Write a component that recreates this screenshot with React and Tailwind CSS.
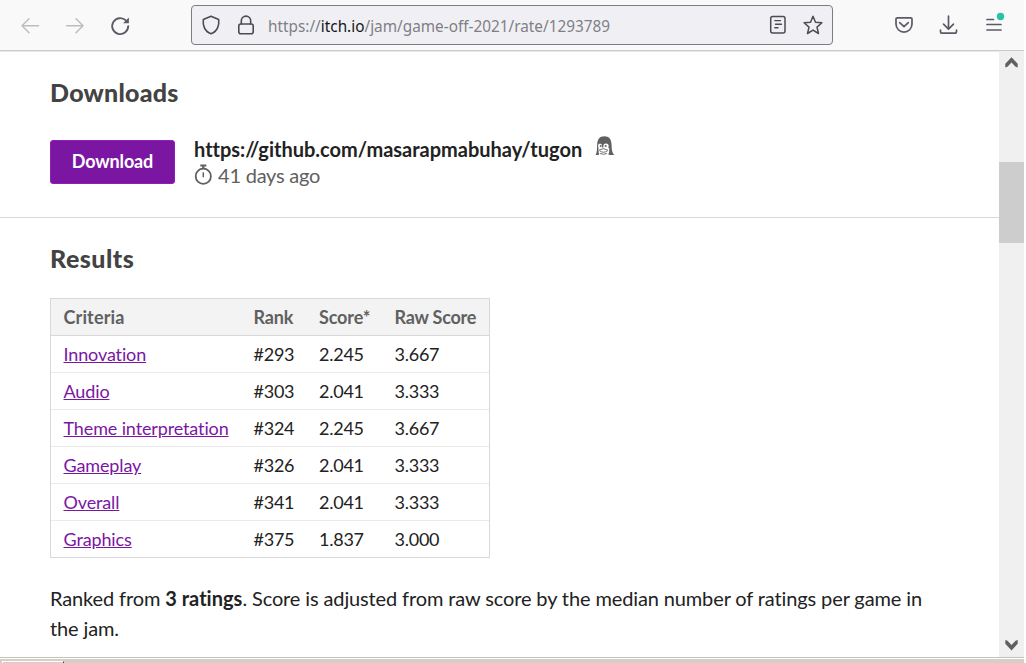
import React from "react";

const rows = [
  ["Innovation", "#293", "2.245", "3.667"],
  ["Audio", "#303", "2.041", "3.333"],
  ["Theme interpretation", "#324", "2.245", "3.667"],
  ["Gameplay", "#326", "2.041", "3.333"],
  ["Overall", "#341", "2.041", "3.333"],
  ["Graphics", "#375", "1.837", "3.000"],
];

function Icon({ className = "", children, w = 20, h = 20, sw = 1.5 }) {
  return (
    <svg width={w} height={h} viewBox={`0 0 ${w} ${h}`} fill="none" stroke="currentColor" strokeWidth={sw} strokeLinecap="round" strokeLinejoin="round" className={"shrink-0 " + className}>
      {children}
    </svg>
  );
}

function Toolbar() {
  return (
    <header className="flex h-[50px] w-[1024px] shrink-0 items-start bg-[#f9f9fa] text-[#5b5b66]">
      <Icon className="mt-4 ml-5 text-[#bdbdc1]"><path d="M18.5 9.8H2M9 2.8L2 9.8l7 7" /></Icon>
      <Icon className="mt-4 ml-[25px] text-[#bdbdc1]"><path d="M1.500 9.800H18M11 2.800l7 7-7 7" /></Icon>
      <Icon className="mt-4 ml-[25px]" sw={1.9}>
        <path d="M18.200 10.300a8 8 0 1 1-2.400-5.900" />
        <path d="M18.900 1.500v5.800h-5.800z" fill="currentColor" stroke="none" />
      </Icon>
      <div className="mt-[5px] ml-[61px] flex h-10 w-[642px] items-center rounded border border-[#7c7c82] bg-[#f0f0f4]">
        <Icon className="ml-[9px] text-[#4b4b52]" sw={1.6}><path d="M10 1.300 17.700 4.500c.7 5.500-1.200 12-7.700 14.200C3.500 16.500 1.600 10 2.300 4.500z" /></Icon>
        <Icon className="ml-[15px] text-[#4b4b52]" sw={1.6}>
          <rect x="2.800" y="9" width="14.400" height="9.700" rx="2" />
          <path d="M5.300 9V5.800a4.700 4.700 0 0 1 9.400 0V9" />
        </Icon>
        <span className="ml-[12px] w-[500px] font-['Noto_Sans',sans-serif] text-base whitespace-nowrap">
          <svg width="342" height="24" className="overflow-visible" fill="#7f7f86">
            <text x="0" y="19" textLength="342" lengthAdjust="spacingAndGlyphs">https://<tspan fill="#15141a">itch.io</tspan>/jam/game-off-2021/rate/1293789</text>
          </svg>
        </span>
        <Icon className="text-[#4b4b52]">
          <rect x="2.700" y="1.500" width="14.300" height="16.500" rx="2" />
          <path d="M6.800 5.600h5.700M7.500 9.200h6M6.800 12.700h3.200" strokeWidth="1.400" />
        </Icon>
        <Icon className="ml-[15px] text-[#4b4b52]"><path d="M10 1.300l2.500 6 6.400.5-4.900 4.300 1.500 6.400-5.500-3.400-5.500 3.400L6 12.100 1.100 7.800l6.400-.5z" /></Icon>
      </div>
      <Icon className="mt-[15px] ml-[61px]" sw={1.7}>
        <path d="M3.300 2.800h13.400q1.300 0 1.300 1.300v5a8 8 0 0 1-16 0v-5q0-1.300 1.300-1.300z" />
        <path d="M5.700 7.600 10 11.700l4.300-4.100" />
      </Icon>
      <Icon className="mt-[15px] ml-[25px]" sw={1.7}>
        <path d="M9.500 1v13M4.500 9.200l5 5 5-5" /><path d="M1.500 15v1.500q0 1.700 1.700 1.700h12.600q1.700 0 1.700-1.700V15" />
      </Icon>
      <Icon className="mt-[12px] ml-[26px]" w={24} h={22} sw={1.7}>
        <path d="M2 7.500h6.500M2 12.500h14M2 18h14" />
        <circle cx="15.500" cy="4.500" r="3.700" fill="#2ac3a2" stroke="none" />
      </Icon>
    </header>
  );
}

function Scrollbar() {
  return (
    <div className="flex w-[25px] shrink-0 flex-col items-center bg-[#f0f0f0]">
      <svg width="25" height="111" className="shrink-0"><path d="M6.300 16.500v-3.700l6.200-6.500 6.200 6.500v3.700l-2.200-.7-4-4.200-4 4.200z" fill="#606060" /></svg>
      <div className="h-[81px] w-full shrink-0 bg-[#cdcdcd]" />
      <div className="flex-1" />
      <svg width="25" height="24" className="shrink-0"><path d="M6.300 7v3.700l6.200 6.800 6.200-6.800V7l-2.200.7-4 4.200-4-4.200z" fill="#606060" /></svg>
    </div>
  );
}

function Stopwatch() {
  return (
    <svg width="18" height="21" viewBox="0 0 18 21" fill="none" stroke="#606060" className="mr-1.5 -mt-[2px] shrink-0">
      <circle cx="9.300" cy="12.300" r="7.600" strokeWidth="1.800" />
      <path d="M6.300 1.500h6M9.300 2v3" strokeWidth="2.200" />
      <path d="M9.300 8.300v5" strokeWidth="1.500" />
    </svg>
  );
}

function Penguin() {
  return (
    <svg width="20" height="20" viewBox="0 0 20 20" className="ml-[13px] mb-[6px] shrink-0">
      <path d="M.5 19C2 17 2 13 2.200 8 2.500 3 5 .3 9.300.3c4.500 0 7 2.700 7.200 7.700.2 5 .5 9 3 11H14l-1-1.500H4.500L3.500 19z" fill="#606060" />
      <path d="M3.400 12.300 3.700 17q1 2.300 5 2.300T14 17l.3-4.700q-5-2-10.900 0z" fill="#fff" />
      <ellipse cx="5" cy="10.100" rx="2" ry="2.500" fill="#fff" />
      <ellipse cx="11" cy="10.100" rx="2.700" ry="2.600" fill="#fff" />
      <circle cx="5.600" cy="10" r="0.900" fill="#606060" />
      <circle cx="10.600" cy="10" r="1" fill="#606060" />
      <path d="M4.300 14Q8 11.300 12.700 14M4.300 14.500q4 3.500 8.600 0M5 17.500q3.500 1.500 7 0" fill="none" stroke="#606060" strokeWidth="0.900" />
    </svg>
  );
}

export default function App() {
  return (
    <div className="flex h-[663px] w-[1026px] flex-col overflow-hidden bg-white font-[Lato,sans-serif] text-[#222] [font-variant-ligatures:none]">
      <Toolbar />
      <div className="h-px w-[1024px] shrink-0 bg-[#cccccc]" />
      <div className="flex h-[606px] w-[1024px] shrink-0">
        <main className="w-[999px] border-t border-[#e8e8e8]">
          <section className="h-[166px] border-b border-[#d8d8d8] pt-[24px] pl-[50px]">
            <h2 className="text-[25px] leading-8 font-black tracking-[0.25px] text-[#434343]">Downloads</h2>
            <div className="mt-[32px] flex">
              <button className="h-11 w-[125px] rounded-[3px] border border-[#8c1fb5] bg-[#7b16a3] pb-[2px] text-lg font-bold tracking-[-0.15px] text-white">Download</button>
              <div className="ml-[19px] -mt-[4px]">
                <div className="flex h-[26px] items-center">
                  <span className="w-[388px] text-xl leading-[26px] font-bold tracking-[-0.01px] whitespace-nowrap">https://github.com/masarapmabuhay/tugon</span>
                  <Penguin />
                </div>
                <div className="flex h-[26px] items-center text-xl tracking-[-0.22px] text-[#606060]"><Stopwatch />41 days ago</div>
              </div>
            </div>
          </section>
          <section className="pt-[24px] pl-[50px]">
            <h2 className="text-[25px] leading-8 font-black tracking-[0.5px] text-[#434343]">Results</h2>
            <div className="mt-[24px] w-[440px] border border-[#d8d8d8] text-lg tracking-[-0.13px]">
              <div className="grid h-[37px] grid-cols-[190px_65.500px_75.500px_1fr] items-center border-b border-[#d8d8d8] bg-[#f3f3f3] pl-[12.500px] font-bold text-[#606060]">
                <span className="tracking-[0.15px]">Criteria</span><span>Rank</span><span>Score*</span><span className="tracking-[-0.22px]">Raw Score</span>
              </div>
              {rows.map((r, i) => (
                <div key={r[0]} className={i < 5 ? "grid h-[37px] grid-cols-[190px_65.500px_75.500px_1fr] items-center border-b border-[#ebebeb] pl-[12.500px]" : "grid h-9 grid-cols-[190px_65.500px_75.500px_1fr] items-center pl-[12.500px]"}>
                  <a className="text-[#7b16a3] underline">{r[0]}</a>
                  <span className="tracking-[-0.25px]">{r[1]}</span><span className="tracking-[-0.25px]">{r[2]}</span><span className="tracking-[-0.25px]">{r[3]}</span>
                </div>
              ))}
            </div>
            <p className="mt-[25px] text-xl leading-[30px] tracking-[-0.125px] whitespace-nowrap">
              Ranked from <strong className="tracking-[0.02px]">3 ratings</strong>. Score is adjusted from raw score by the median number of ratings per game in<br />the jam.
            </p>
          </section>
        </main>
        <Scrollbar />
      </div>
      <footer className="h-[6px] w-[1024px] shrink-0 border-t border-[#c5c2bc] bg-[#d4d0c8]">
        <div className="h-px bg-white" />
        <div className="mt-[2px] ml-[2px] h-[2px] w-[62px] border-t border-l border-r border-t-white border-l-white border-r-[#404040]" />
      </footer>
    </div>
  );
}
